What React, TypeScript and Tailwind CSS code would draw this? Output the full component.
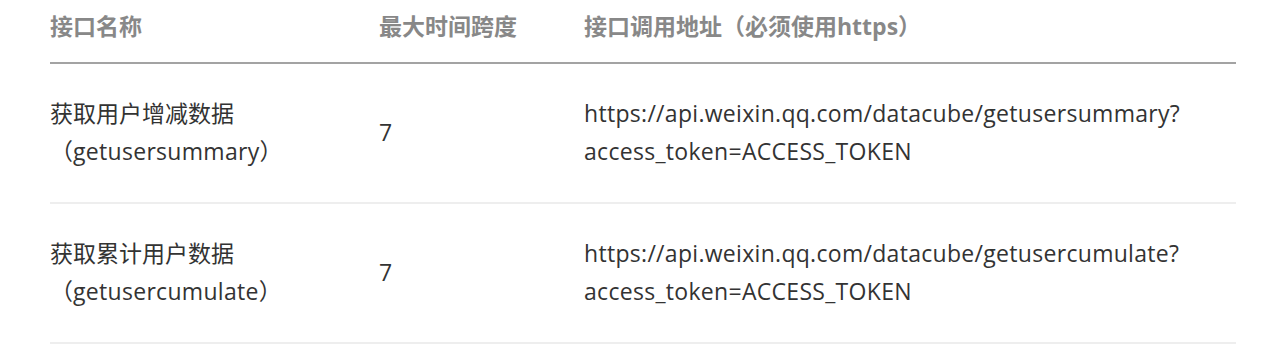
const rows = [
  {
    name: "获取用户增减数据",
    method: "getusersummary",
    span: "7",
    url: "https://api.weixin.qq.com/datacube/getusersummary?",
  },
  {
    name: "获取累计用户数据",
    method: "getusercumulate",
    span: "7",
    url: "https://api.weixin.qq.com/datacube/getusercumulate?",
  },
];

export default function App() {
  return (
    <div
      className="w-[1280px] h-[350px] bg-white pl-[50px] pr-[44px] text-[23px] leading-[38px] text-[#333]"
      style={{ fontFamily: "'Open Sans','Noto Sans CJK SC',sans-serif" }}
    >
      <div className="grid grid-cols-[329px_205px_1fr] border-b-2 border-[#a3a3a3] pt-[7px] pb-[17px] font-bold text-[#888]">
        <div>接口名称</div>
        <div>最大时间跨度</div>
        <div>接口调用地址（必须使用https）</div>
      </div>
      {rows.map((r) => (
        <div
          key={r.method}
          className="grid grid-cols-[329px_205px_1fr] items-center border-b-2 border-[#eeeeee] pt-[30px] pb-[32px]"
        >
          <div>
            <div>{r.name}</div>
            <div>
              （<span className="tracking-[0.3px]">{r.method}</span>）
            </div>
          </div>
          <div>{r.span}</div>
          <div className="tracking-[0.3px]">
            <div>{r.url}</div>
            <div>access_token=ACCESS_TOKEN</div>
          </div>
        </div>
      ))}
    </div>
  );
}
